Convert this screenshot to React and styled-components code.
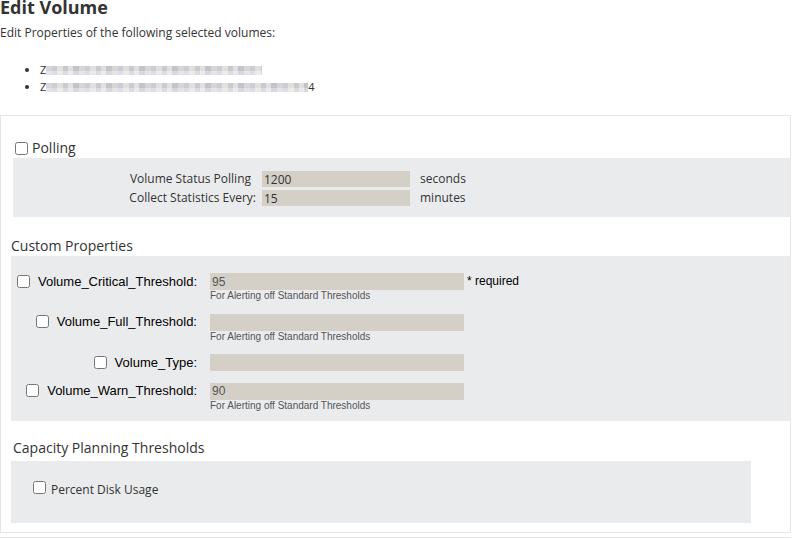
import styled, { createGlobalStyle } from "styled-components";

const GlobalStyle = createGlobalStyle`
  body {
    margin: 0;
    background: #fff;
    font-family: "Open Sans", "Liberation Sans", sans-serif;
    color: #333;
  }
`;

const Page = styled.div`
  width: 793px;
  padding-top: 1px;
`;

const Title = styled.h1`
  margin: 0;
  font-size: 18px;
  line-height: 13px;
  font-weight: 700;
  color: #333;
`;

const Intro = styled.p`
  margin: 11px 0 0;
  font-size: 12px;
  line-height: 16px;
`;

const VolumeList = styled.ul`
  margin: 20px 0 0;
  padding-left: 40px;
  font-size: 11px;
  line-height: 17px;
`;

const Redacted = styled.span`
  display: inline-block;
  vertical-align: middle;
  width: ${(p) => p.$width}px;
  height: 9px;
  margin-top: -2px;
  background:
    repeating-linear-gradient(0deg, rgba(255, 255, 255, 0.35) 0 4px, transparent 4px 9px),
    repeating-linear-gradient(
      90deg,
      #d8d5d9 0 6px,
      #c9ced5 6px 11px,
      #e2e0de 11px 17px,
      #cdc8cc 17px 22px,
      #dde1e5 22px 27px,
      #c4c3c8 27px 33px
    );
  filter: blur(0.6px);
`;

const Panel = styled.div`
  box-sizing: border-box;
  width: 791px;
  margin-top: 20px;
  border: 1px solid #e6e6e6;
  padding-bottom: 9px;
`;

const CheckHeader = styled.label`
  display: flex;
  align-items: center;
  gap: 4px;
  height: 20px;
  margin-top: 22px;
  padding-left: 14px;
  font-size: 14px;
  line-height: 20px;
`;

const SectionTitle = styled.div`
  height: 20px;
  margin: ${(p) => p.$above}px 0 ${(p) => p.$below}px;
  padding-left: ${(p) => p.$indent}px;
  font-size: 14px;
  line-height: 20px;
`;

const Check = styled.input.attrs({ type: "checkbox" })`
  width: 13px;
  height: 13px;
  margin: 0;
  flex: none;
`;

const GreyBox = styled.div`
  background: #eaebed;
  margin-left: ${(p) => p.$left}px;
  ${(p) => p.$width && `width: ${p.$width}px;`}
`;

const PollingGrid = styled.div`
  display: grid;
  grid-template-columns: 249px 148px auto;
  row-gap: 3px;
  padding: 13px 0 11px;
  font-size: 12px;
  line-height: 16px;
`;

const PollLabel = styled.div`
  text-align: right;
  padding-right: ${(p) => p.$pad}px;
`;

const Field = styled.input`
  display: block;
  box-sizing: border-box;
  width: 100%;
  height: ${(p) => p.$h}px;
  margin: 0;
  border: none;
  outline: none;
  background: #d4d0c8;
  padding: 0 2px;
  font-family: inherit;
  font-size: ${(p) => p.$size}px;
  color: ${(p) => p.$color};
`;

const Unit = styled.div`
  padding-left: 10px;
`;

const CustomList = styled.div`
  display: flex;
  flex-direction: column;
  gap: 11.5px;
  padding: 17px 0 9.5px;
  font-family: "Liberation Sans", Arial, sans-serif;
  color: #000;
`;

const PropRow = styled.div`
  display: grid;
  grid-template-columns: 186px 254px auto;
  column-gap: 13px;
  align-items: start;
`;

const PropLabel = styled.label`
  display: flex;
  justify-content: flex-end;
  align-items: center;
  gap: 8px;
  height: 16px;
  font-size: 13px;
`;

const Helper = styled.div`
  font-size: 10px;
  line-height: 12px;
  color: #555;
`;

const Required = styled.span`
  margin-left: -10px;
  font-size: 12px;
  line-height: 16px;
`;

const CapacityRow = styled.label`
  display: flex;
  align-items: flex-start;
  gap: 5px;
  padding: 21px 0 26px 22px;
  font-size: 12px;
  line-height: 15px;
  input {
    margin-top: -1px;
  }
`;

const FooterLine = styled.div`
  width: 791px;
  margin-top: 4px;
  border-top: 1px solid #e6e6e6;
  height: 2px;
`;

const customProps = [
  { name: "Volume_Critical_Threshold:", value: "95", help: true, required: true },
  { name: "Volume_Full_Threshold:", value: "", help: true },
  { name: "Volume_Type:", value: "", help: false },
  { name: "Volume_Warn_Threshold:", value: "90", help: true },
];

export default function App() {
  return (
    <Page>
      <GlobalStyle />
      <Title>Edit Volume</Title>
      <Intro>Edit Properties of the following selected volumes:</Intro>
      <VolumeList>
        <li>
          Z<Redacted $width={216} />
        </li>
        <li>
          Z<Redacted $width={262} />4
        </li>
      </VolumeList>

      <Panel>
        <CheckHeader>
          <Check />
          Polling
        </CheckHeader>
        <GreyBox $left={12}>
          <PollingGrid>
            <PollLabel $pad={11}>Volume Status Polling</PollLabel>
            <Field $h={16} $size={12} $color="#333" readOnly value="1200" />
            <Unit>seconds</Unit>
            <PollLabel $pad={6}>Collect Statistics Every:</PollLabel>
            <Field $h={16} $size={12} $color="#333" readOnly value="15" />
            <Unit>minutes</Unit>
          </PollingGrid>
        </GreyBox>

        <SectionTitle $above={19} $indent={10} $below={0}>
          Custom Properties
        </SectionTitle>
        <GreyBox $left={10}>
          <CustomList>
            {customProps.map((p) => (
              <PropRow key={p.name}>
                <PropLabel>
                  <Check />
                  {p.name}
                </PropLabel>
                <div>
                  <Field $h={17} $size={12} $color="#555" readOnly value={p.value} />
                  {p.help && <Helper>For Alerting off Standard Thresholds</Helper>}
                </div>
                {p.required && <Required>* required</Required>}
              </PropRow>
            ))}
          </CustomList>
        </GreyBox>

        <SectionTitle $above={17} $indent={12} $below={3}>
          Capacity Planning Thresholds
        </SectionTitle>
        <GreyBox $left={10} $width={740}>
          <CapacityRow>
            <Check />
            Percent Disk Usage
          </CapacityRow>
        </GreyBox>
      </Panel>
      <FooterLine />
    </Page>
  );
}
